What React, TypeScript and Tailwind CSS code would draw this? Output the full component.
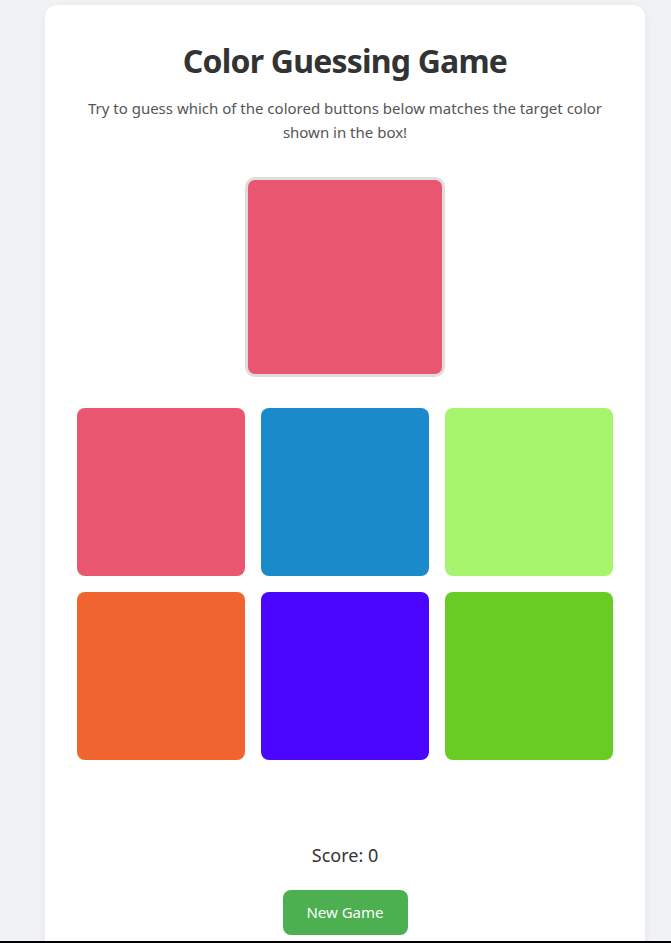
import * as React from "react";

const font = { fontFamily: '"Segoe UI", "Noto Sans", "Open Sans", sans-serif' };

const options = ["#e95670", "#1a8acb", "#a7f46d", "#f06430", "#4a06ff", "#68cc24"];

export default function App() {
  const [score] = React.useState(0);
  const target = options[0];

  return (
    <div className="h-[943px] flex flex-col bg-[#f0f2f5]" style={font}>
      <div className="flex-1 overflow-hidden flex items-start justify-start pl-[45px] pt-[5px]">
        <div className="w-[600px] shrink-0 bg-white rounded-[12px] shadow-[0_2px_8px_rgba(0,0,0,0.06)] px-8 pt-[37px] pb-12 text-center">
          <h1 className="text-[32px] leading-[38px] font-bold text-[#333] tracking-[-0.8px]">Color Guessing Game</h1>
          <p className="mt-4 text-[15px] leading-6 text-[#555] px-2">
            Try to guess which of the colored buttons below matches the target color shown in the box!
          </p>

          <div
            className="mx-auto mt-[33px] w-[200px] h-[200px] rounded-[10px] border-[3px] border-[#ddd]"
            style={{ backgroundColor: target }}
          />

          <div className="mt-[31px] grid grid-cols-3 gap-4">
            {options.map((c) => (
              <button
                key={c}
                className="h-[168px] rounded-[8px] cursor-pointer"
                style={{ backgroundColor: c }}
              />
            ))}
          </div>

          <div className="h-[83px]" />
          <p className="text-[18px] leading-[24px] text-[#333]">Score: {score}</p>
          <button className="mt-[23px] w-[125px] h-[45px] rounded-[8px] bg-[#4caf50] text-white text-[15px]">
            New Game
          </button>
        </div>
      </div>
      <div className="h-[2px] bg-black" />
    </div>
  );
}
